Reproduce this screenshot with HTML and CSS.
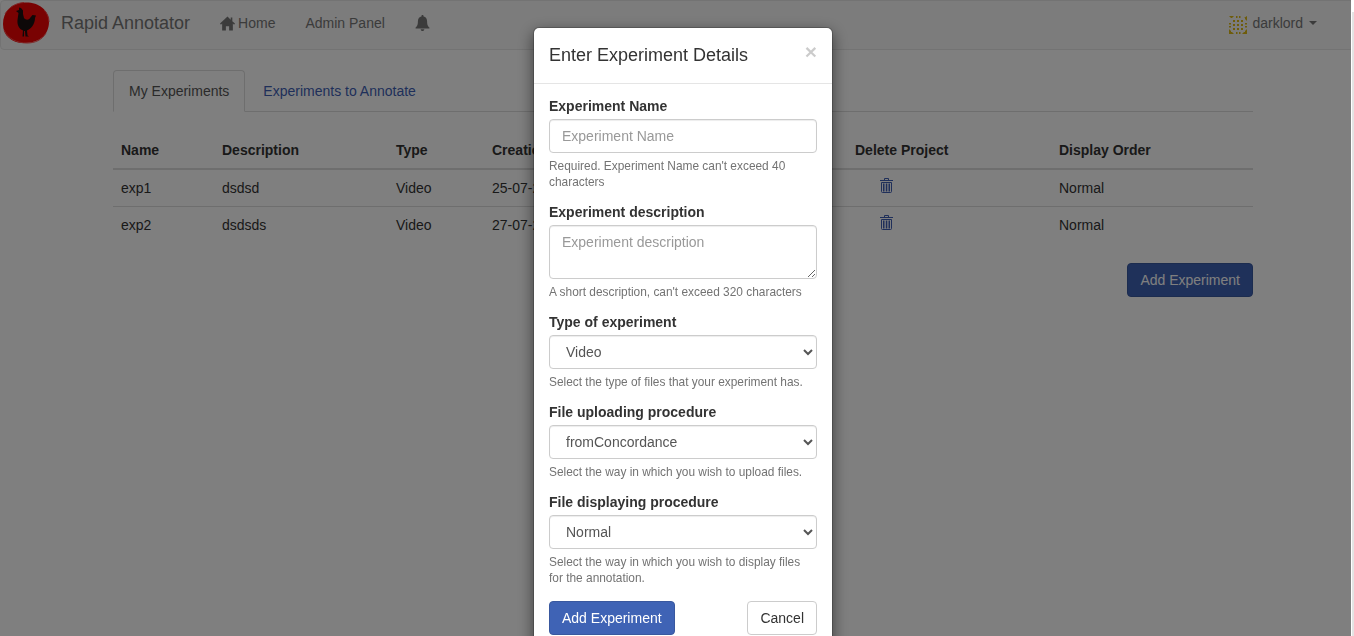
FILE: index.html
```html
<!DOCTYPE html>
<html lang="en">
<head>
<meta charset="utf-8">
<title>Rapid Annotator</title>
<link rel="stylesheet" href="styles.css">
</head>
<body>
<nav class="navbar">
  <svg class="logo" viewBox="1 1 50 46" aria-hidden="true">
    <path d="M3 24C3 12 11 3 25 2.500c13-.5 24 7 24 19 0 13-9 21-24 21.500C12 43.500 3 36 3 24z" fill="#f20404"/>
    <path d="M4 30c4 9 13 13 23 13 8 0 15-3 19-10M5 14C9 7 16 3 24 2.500M44 10c3 3 5 7 5 12" fill="none" stroke="#ff4a4a" stroke-width="1"/>
    <path d="M16 11L19 10L19 7.500L21 8L23 10.500L23 14L24 18C26 20.500 29 20 30 18L32.500 15L36 15.500L35 18C35 24 31 29 27 30.500L27.500 35.500L29 36.500L25.500 36.500L25 31L24 31L24 36.500L22.500 36.500L23 30.500C19 29 17 25 17.500 20L18.500 13Z" fill="#1a1010"/>
  </svg>
  <a class="brand">Rapid Annotator</a>
  <a class="nav-link home">
    <svg class="glyph" viewBox="0 0 14 14" aria-hidden="true"><path d="M7 .5L0 7.100l.9 1L2 7.100V13.500h3.500v-4h3v4H12V7.100l1.100 1 .9-1L11.500 4.800V1.500H10v1.900z" fill="currentColor"/></svg>
    <span>Home</span>
  </a>
  <a class="nav-link">Admin Panel</a>
  <a class="nav-link bell">
    <svg class="glyph" viewBox="0 0 14 15" aria-hidden="true"><path d="M7 0c.6 0 1 .4 1 1v.5c2 .4 3.300 2.100 3.300 4.300 0 3.700 1 4.800 2.200 6v.9H.5v-.9c1.200-1.200 2.200-2.300 2.200-6C2.700 3.600 4 1.900 6 1.500V1c0-.6.4-1 1-1zM5.300 13.300h3.400C8.700 14.400 7.900 15 7 15s-1.700-.6-1.700-1.700z" fill="currentColor"/></svg>
  </a>
  <div class="user">
    <svg class="identicon" viewBox="0 0 20 20" aria-hidden="true">
      <g fill="#dcb814">
        <path d="M1 1h5L4 3 3 3zM19 1v5l-2-2V3h-1zM1 19v-5l2 2v1h1l2 2zM19 19h-5l2-2h1v-1l2-2z"/>
        <path d="M8 1h1.500v2H8zM11 1h1.500v2H11zM1 8h2v1.500H1zM1 11h2v1.500H1zM17 8h2v1.500h-2zM17 11h2v1.500h-2zM8 17h1.500v2H8zM11 17h1.500v2H11z"/>
        <path d="M5 5h2v2H5zM9 5h2v2H9zM13 5h2v2h-2zM5 9h2v2H5zM9 9h2v2H9zM13 9h2v2h-2zM5 13h2v2H5zM9 13h2v2H9zM13 13h2v2h-2z"/>
      </g>
    </svg>
    <span>darklord</span>
    <i class="caret"></i>
  </div>
</nav>

<main class="container">
  <ul class="tabs">
    <li class="tab active">My Experiments</li>
    <li class="tab">Experiments to Annotate</li>
  </ul>
  <table class="table">
    <colgroup>
      <col class="c-name"><col class="c-desc"><col class="c-type"><col class="c-date"><col class="c-hidden"><col class="c-del"><col class="c-order">
    </colgroup>
    <thead>
      <tr><th>Name</th><th>Description</th><th>Type</th><th>Creation Date</th><th></th><th>Delete Project</th><th>Display Order</th></tr>
    </thead>
    <tbody>
      <tr><td>exp1</td><td>dsdsd</td><td>Video</td><td>25-07-2018</td><td></td><td class="trash-cell"><svg class="trash" viewBox="0 0 13 15" aria-hidden="true"><path d="M0 2.500h13M4.500 2.500V.5h4v2M1.500 4.500h10v9a1 1 0 0 1-1 1h-8a1 1 0 0 1-1-1z" fill="none" stroke="currentColor"/><path d="M3 5.500h1.500v8H3zM5.800 5.500h1.500v8H5.800zM8.500 5.500H10v8H8.500z" fill="currentColor"/></svg></td><td>Normal</td></tr>
      <tr><td>exp2</td><td>dsdsds</td><td>Video</td><td>27-07-2018</td><td></td><td class="trash-cell"><svg class="trash" viewBox="0 0 13 15" aria-hidden="true"><path d="M0 2.500h13M4.500 2.500V.5h4v2M1.500 4.500h10v9a1 1 0 0 1-1 1h-8a1 1 0 0 1-1-1z" fill="none" stroke="currentColor"/><path d="M3 5.500h1.500v8H3zM5.800 5.500h1.500v8H5.800zM8.500 5.500H10v8H8.500z" fill="currentColor"/></svg></td><td>Normal</td></tr>
    </tbody>
  </table>
  <div class="actions"><button class="btn primary" type="button">Add Experiment</button></div>
</main>

<div class="backdrop"></div>
<div class="scroll-strip"></div>

<div class="modal" role="dialog">
  <header class="modal-header">
    <h4>Enter Experiment Details</h4>
    <span class="close">×</span>
  </header>
  <form class="modal-body">
    <label>Experiment Name</label>
    <input class="control" type="text" placeholder="Experiment Name">
    <p class="help">Required. Experiment Name can't exceed 40 characters</p>

    <label>Experiment description</label>
    <textarea class="control area" placeholder="Experiment description"></textarea>
    <p class="help">A short description, can't exceed 320 characters</p>

    <label>Type of experiment</label>
    <select class="control"><option>Video</option></select>
    <p class="help">Select the type of files that your experiment has.</p>

    <label>File uploading procedure</label>
    <select class="control"><option>fromConcordance</option></select>
    <p class="help">Select the way in which you wish to upload files.</p>

    <label>File displaying procedure</label>
    <select class="control"><option>Normal</option></select>
    <p class="help">Select the way in which you wish to display files for the annotation.</p>

    <div class="modal-actions">
      <button class="btn primary" type="button">Add Experiment</button>
      <button class="btn plain" type="button">Cancel</button>
    </div>
  </form>
</div>
</body>
</html>
```
FILE: styles.css
```css
* { box-sizing: border-box; }
html, body { height: 100%; }
body {
  margin: 0;
  overflow: hidden;
  background: #fff;
  color: #333;
  font: 14px/20px "Liberation Sans", Arial, sans-serif;
}
.navbar {
  display: flex;
  align-items: center;
  height: 50px;
  padding-bottom: 4px;
  background: #f8f8f8;
  border: 1px solid #e7e7e7;
  border-radius: 4px;
  color: #777;
  margin-bottom: 20px;
}
.logo { width: 50px; height: 46px; flex: none; align-self: flex-start; }
.brand { font-size: 18px; margin-left: 10px; }
.nav-link { display: flex; align-items: center; gap: 3px; padding: 0 15px; }
.home { margin-left: 15px; }
.home .glyph { width: 15px; height: 15px; }
.bell .glyph { width: 15px; height: 16px; }
.user { display: flex; align-items: center; margin-left: auto; margin-right: 36px; gap: 4px; }
.identicon { width: 20px; height: 20px; margin-top: 3px; }
.caret {
  width: 0; height: 0; margin-left: 2px;
  border-top: 4px solid #777;
  border-left: 4px solid transparent;
  border-right: 4px solid transparent;
}
.container { margin: 0 101px 0 113px; }
.tabs {
  display: flex;
  list-style: none;
  margin: 0 0 20px;
  padding: 0;
  border-bottom: 1px solid #ddd;
}
.tab {
  padding: 10px 15px;
  margin: 0 2px -1px 0;
  height: 42px;
  border: 1px solid transparent;
  border-radius: 4px 4px 0 0;
  color: #3f5fb5;
}
.tab.active {
  color: #555;
  background: #fff;
  border-color: #ddd #ddd transparent;
}
.table { width: 100%; border-collapse: collapse; table-layout: fixed; }
.c-name { width: 101px; } .c-desc { width: 174px; } .c-type { width: 96px; }
.c-date { width: 180px; } .c-hidden { width: 183px; } .c-del { width: 204px; }
th, td { padding: 8px; text-align: left; vertical-align: top; }
th { border-bottom: 2px solid #ddd; font-weight: 700; }
td { border-top: 1px solid #ddd; }
tbody tr:first-child td { border-top: 0; }
tbody td { height: 37px; }
.trash-cell { padding-left: 33px; padding-top: 8px; color: #3f5fb5; }
.trash { display: block; width: 13px; height: 15px; }
.actions { display: flex; justify-content: flex-end; margin-top: 19px; }
.btn {
  height: 34px;
  padding: 6px 12px;
  font: 14px/20px "Liberation Sans", Arial, sans-serif;
  border: 1px solid transparent;
  border-radius: 4px;
}
.primary { background: #3f63b5; border-color: #39589f; color: #fff; }
.plain { background: #fff; border-color: #ccc; color: #333; }
.backdrop { position: fixed; inset: 0; background: rgba(0,0,0,.5); }
.scroll-strip { position: fixed; top: 0; right: 0; bottom: 0; width: 3px; background: #fff; }
.scroll-strip::after { content: ""; position: absolute; top: 12px; right: 0; bottom: 0; width: 2px; background: #e4e4e4; }
.modal {
  position: fixed;
  top: 27px;
  left: 533px;
  width: 300px;
  height: 640px;
  background: #fff;
  border: 1px solid rgba(0,0,0,.2);
  border-radius: 6px;
  box-shadow: 0 5px 15px rgba(0,0,0,.5);
  background-clip: padding-box;
}
.modal-header {
  display: flex;
  justify-content: space-between;
  height: 56px;
  padding: 15px;
  border-bottom: 1px solid #e5e5e5;
}
h4 { margin: 0; font-size: 18px; font-weight: 500; line-height: 25px; }
.close { font-size: 21px; font-weight: 700; line-height: 18px; color: #000; opacity: .2; }
.modal-body { display: flex; flex-direction: column; padding: 10px 15px; }
label { font-weight: 700; margin: 2px 0 3px; }
.control {
  display: block;
  width: 100%;
  height: 34px;
  padding: 6px 12px;
  font: 14px/20px "Liberation Sans", Arial, sans-serif;
  color: #555;
  background: #fff;
  border: 1px solid #ccc;
  border-radius: 4px;
  box-shadow: inset 0 1px 1px rgba(0,0,0,.075);
}
.area { height: 54px; }
.control::placeholder { color: #999; }
.help { margin: 5px 0 10px; color: #737373; font-size: 11.900px; line-height: 16px; }
.modal-actions { display: flex; justify-content: space-between; margin-top: 5px; }
```
